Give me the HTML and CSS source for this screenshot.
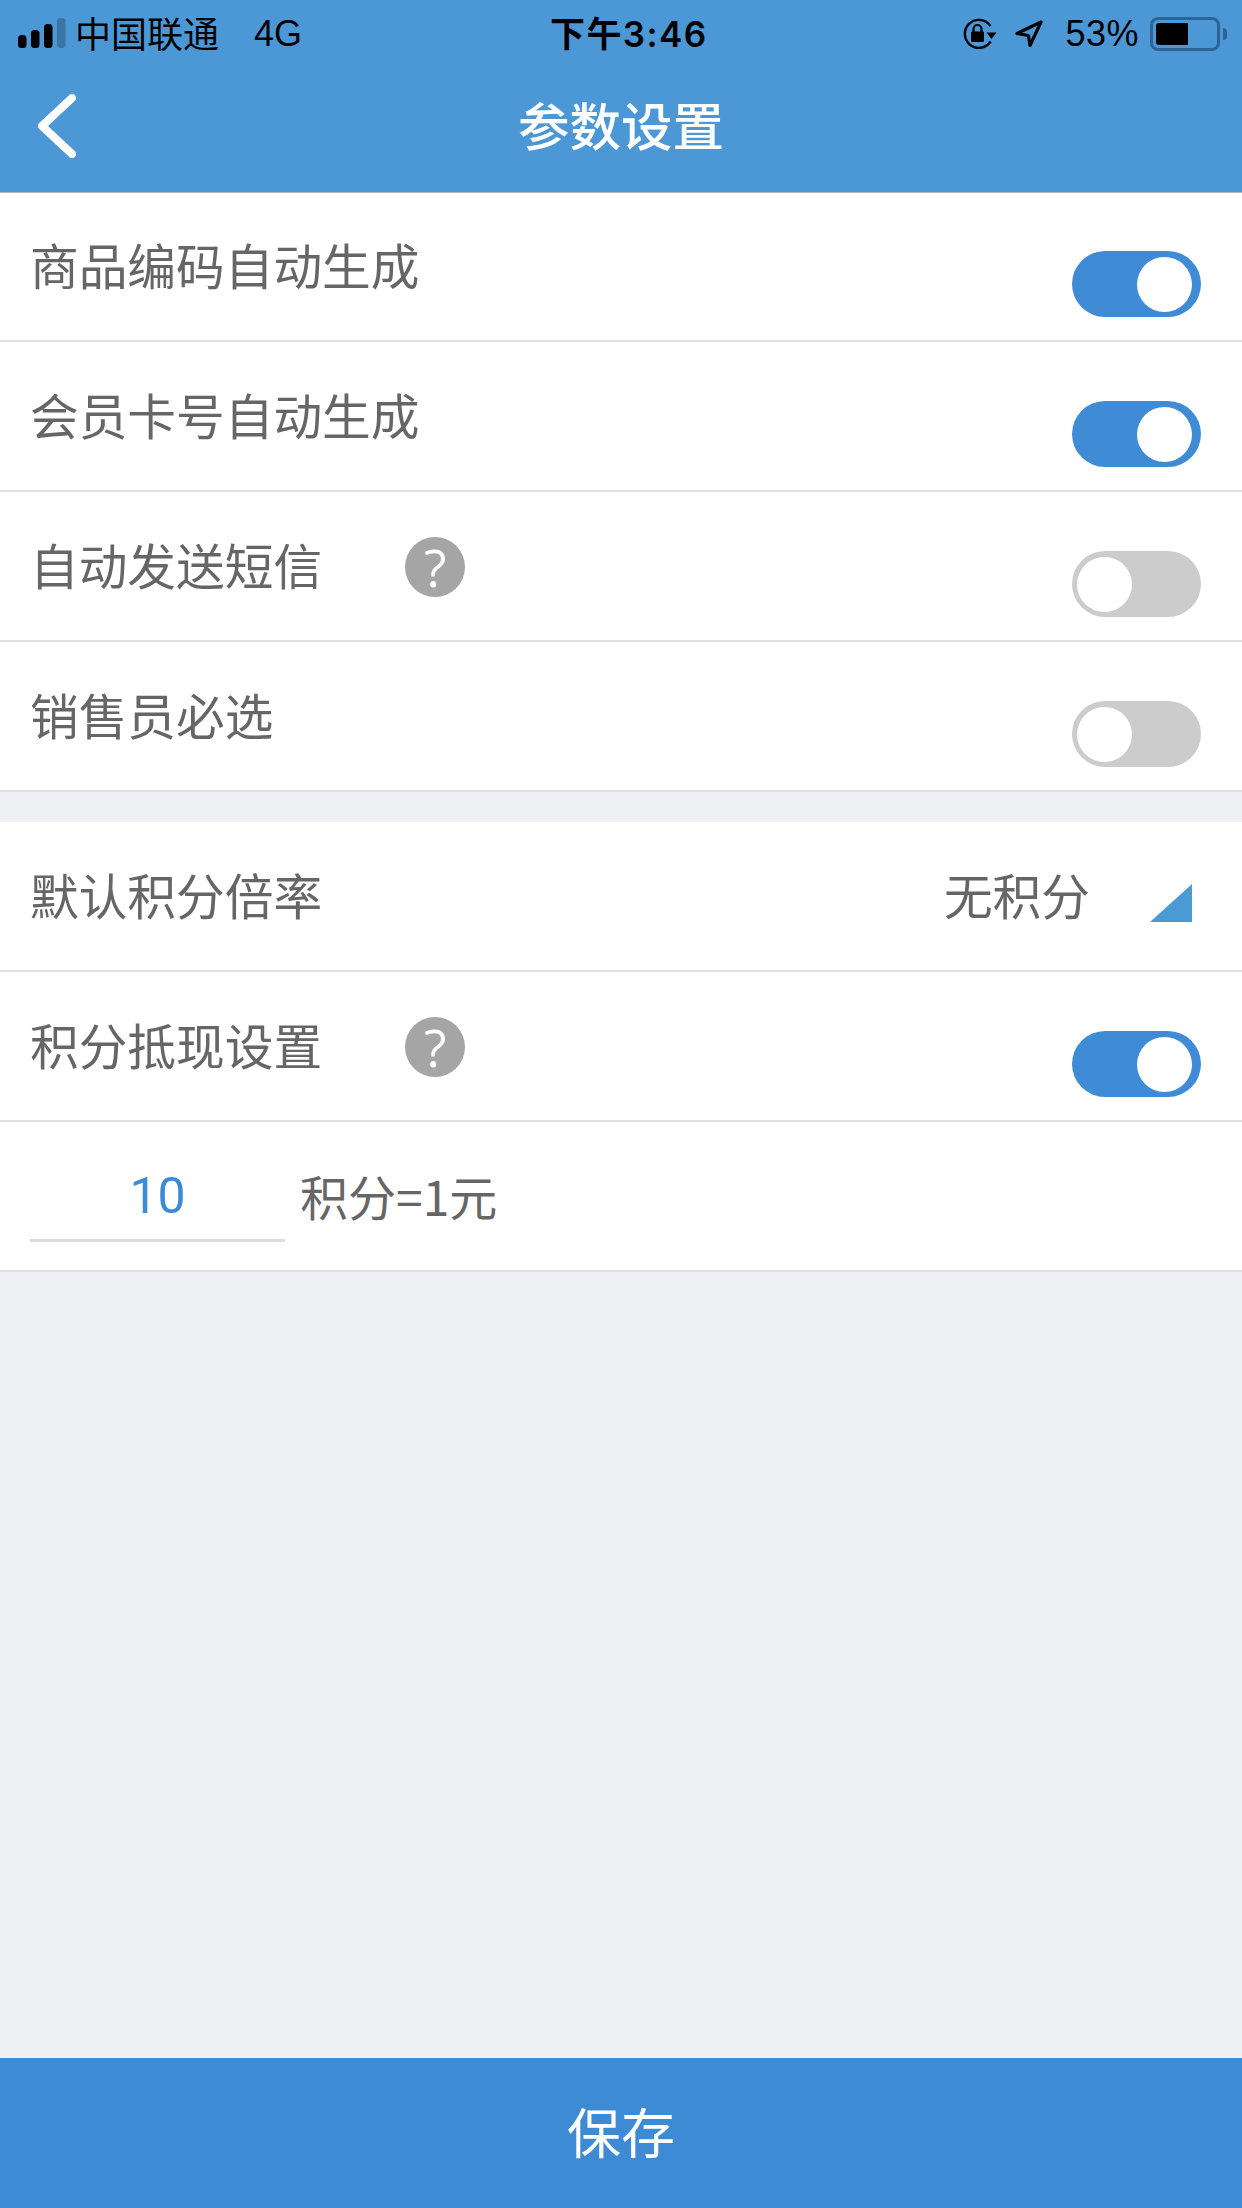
FILE: index.html
```html
<!DOCTYPE html>
<html lang="zh-CN">
<head>
<meta charset="utf-8">
<title>参数设置</title>
<link rel="stylesheet" href="styles.css">
</head>
<body>
<div class="page">
  <header class="top">
    <div class="status">
      <div class="status-left">
        <svg class="signal" width="50" height="30" viewBox="0 0 50 30">
          <rect x="0" y="17" width="8.5" height="13" rx="3.5" fill="#000"/>
          <rect x="13" y="12" width="8.5" height="18" rx="3.5" fill="#000"/>
          <rect x="26" y="6" width="8.5" height="24" rx="3.5" fill="#000"/>
          <rect x="39" y="0" width="8.5" height="30" rx="3.5" fill="#3b75a6"/>
        </svg>
        <span class="carrier">中国联通</span>
        <span class="net">4G</span>
      </div>
      <div class="time">下午3:46</div>
      <div class="status-right">
        <svg class="rot" width="36" height="32" viewBox="0 0 36 32">
          <path d="M28.6 23.5A14 14 0 1 1 28.4 8" fill="none" stroke="#000" stroke-width="2.4"/>
          <path d="M24.5 14.5h10l-5 6.5z" fill="#000"/>
          <rect x="9" y="13.5" width="13" height="10.5" rx="1.2" fill="#000"/>
          <path d="M11.5 14V11a4 4 0 0 1 8 0v3" fill="none" stroke="#000" stroke-width="2.2"/>
        </svg>
        <svg class="loc" width="28" height="28" viewBox="0 0 28 28">
          <path d="M26 2 2 13.5l11.5 2L15 25.5z" fill="none" stroke="#000" stroke-width="3.2" stroke-linejoin="round"/>
        </svg>
        <span class="pct">53%</span>
        <div class="battery"><div class="battery-fill"></div></div>
        <div class="nub"></div>
      </div>
    </div>
    <nav class="nav">
      <svg class="back" width="40" height="64" viewBox="0 0 40 64">
        <path d="M34 4 4 32l30 28" fill="none" stroke="#fff" stroke-width="8" stroke-linecap="round" stroke-linejoin="round"/>
      </svg>
      <h1 class="title">参数设置</h1>
    </nav>
  </header>

  <section class="group">
    <div class="row"><span class="label">商品编码自动生成</span><span class="spacer"></span><div class="toggle on"><i class="knob"></i></div></div>
    <div class="row"><span class="label">会员卡号自动生成</span><span class="spacer"></span><div class="toggle on"><i class="knob"></i></div></div>
    <div class="row"><span class="label">自动发送短信</span><span class="help">?</span><span class="spacer"></span><div class="toggle off"><i class="knob"></i></div></div>
    <div class="row"><span class="label">销售员必选</span><span class="spacer"></span><div class="toggle off"><i class="knob"></i></div></div>
  </section>

  <section class="group second">
    <div class="row">
      <span class="label">默认积分倍率</span><span class="spacer"></span><span class="label">无积分</span>
      <svg class="corner" width="42" height="38" viewBox="0 0 42 38"><path d="M0 38 42 0v38z" fill="#4a9ad4"/></svg>
    </div>
    <div class="row"><span class="label">积分抵现设置</span><span class="help">?</span><span class="spacer"></span><div class="toggle on"><i class="knob"></i></div></div>
    <div class="row rate">
      <div class="field">10</div>
      <span class="label unit">积分=1元</span>
    </div>
  </section>

  <div class="fill"></div>
  <button class="save">保存</button>
</div>
</body>
</html>
```
FILE: styles.css
```css
* { box-sizing: border-box; }
html, body { margin: 0; padding: 0; }
body {
  background: #eff0f4;
  font-family: "Noto Sans CJK SC", "Liberation Sans", sans-serif;
}
.page { display: flex; flex-direction: column; min-height: 2208px; }

.top { background: #4c98d6; position: relative; box-shadow: 0 1px 0 #b5b5b5; }
.status {
  height: 64px;
  display: grid;
  grid-template-columns: 550px 156px 1fr;
  align-items: center;
  color: #000;
}
.status-left { display: flex; align-items: center; padding-left: 18px; }
.signal { margin-top: -1px; }
.carrier { font-size: 36px; line-height: 64px; margin-left: 7px; padding-bottom: 3px; }
.net { font-family: "Liberation Sans", sans-serif; font-size: 36px; margin-left: 35px; }
.time { font-family: "Inter", "Noto Sans CJK SC", sans-serif; font-size: 35px; font-weight: 600; white-space: nowrap; letter-spacing: 1.4px; padding-bottom: 4px; }
.status-right { display: flex; align-items: center; justify-content: flex-end; padding-right: 15px; }
.rot { margin-right: 17px; }
.loc { margin-right: 22px; }
.pct { font-family: "Liberation Sans", sans-serif; font-size: 36px; margin-right: 11px; letter-spacing: 0.5px; }
.battery {
  width: 70px; height: 34px;
  border: 3px solid #2c6595; border-radius: 8px;
  padding: 3px;
}
.battery-fill { width: 32px; height: 22px; background: #000; border-radius: 3px 0 0 3px; }
.nub { width: 4px; height: 12px; background: #2c6595; margin-left: 3px; border-radius: 0 4px 4px 0; }

.nav { height: 128px; display: flex; align-items: center; justify-content: center; position: relative; }
.back { position: absolute; left: 38px; top: 30px; }
.title { margin: 0; padding-bottom: 8px; font-size: 51.5px; font-weight: 500; color: #fff; line-height: 1; }

.group { display: flex; flex-direction: column; }
.second { margin-top: 30px; }
.row {
  height: 150px;
  background: #fff;
  border-bottom: 2px solid #e0e0e0;
  display: flex;
  align-items: center;
  padding: 0 41px 0 30px;
}
.label { font-size: 48.7px; color: #666; line-height: 1; white-space: nowrap; padding-bottom: 4px; }
.spacer { flex: 1; }

.help {
  width: 60px; height: 60px; margin-left: 83px; margin-top: 2px;
  border-radius: 50%;
  background: #a5a5a5; color: #fff;
  display: flex; align-items: center; justify-content: center;
  font-family: "Open Sans", sans-serif;
  font-size: 52px; font-weight: 500; line-height: 60px;
}

.toggle {
  width: 129px; height: 66px;
  margin-top: 36px;
  border-radius: 33px;
  display: flex; align-items: center;
}
.toggle.on { background: #408bd6; justify-content: flex-end; padding-right: 9px; }
.toggle.off { background: #cccccc; justify-content: flex-start; padding-left: 5px; }
.knob { display: block; width: 55px; height: 55px; border-radius: 50%; background: #fff; }

.corner { margin-left: 60px; margin-right: 9px; margin-top: 14px; }

.field {
  width: 255px; height: 92px;
  border-bottom: 3px solid #dcdcdc;
  color: #3d8bd5;
  font-family: "Roboto", sans-serif;
  font-size: 50px; font-weight: 400; line-height: 92px;
  text-align: center;
}
.unit { margin-left: 15px; padding-bottom: 2px; font-size: 48px; }

.fill { flex: 1; }
.save {
  height: 150px; width: 100%;
  border: 0; padding: 0 0 5px;
  background: #3d8bd5; color: #fff;
  font-family: "Noto Sans CJK SC", sans-serif;
  font-size: 54px;
}
```
